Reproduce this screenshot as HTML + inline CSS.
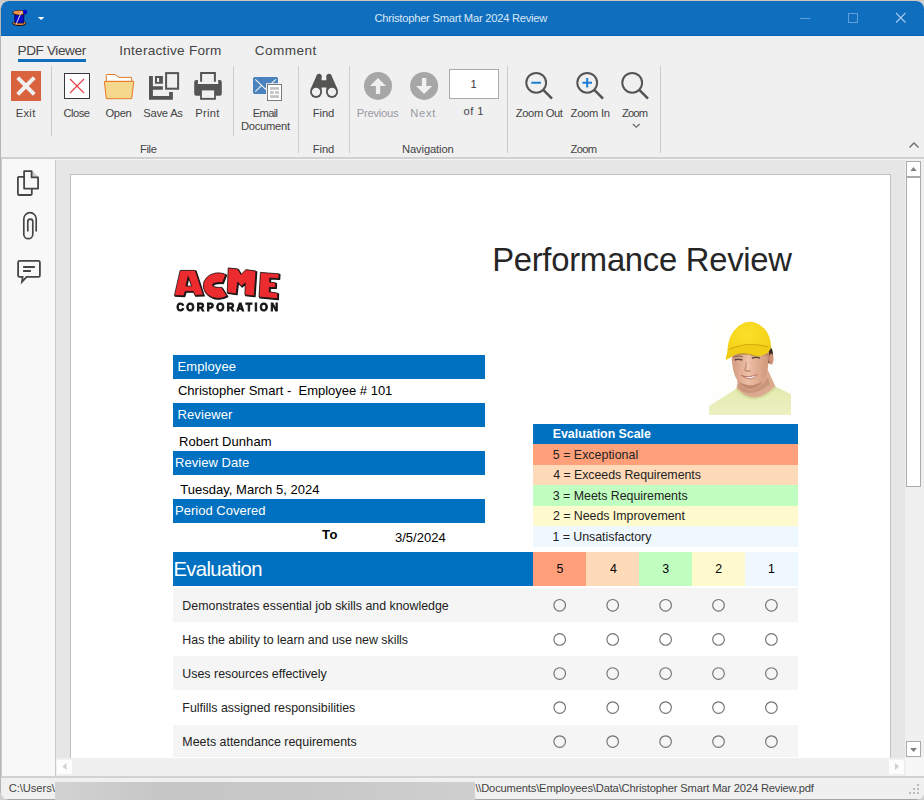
<!DOCTYPE html>
<html><head><meta charset="utf-8"><title>Christopher Smart Mar 2024 Review</title>
<style>
html,body{margin:0;padding:0;}
body{width:924px;height:800px;overflow:hidden;position:relative;background:#cfcfcf;font-family:"Liberation Sans",sans-serif;}
div,svg{position:absolute;box-sizing:border-box;}
.t{white-space:pre;margin:0;padding:0;}
#win{left:1px;top:1px;width:923px;height:799px;border-radius:8px 8px 8px 8px;overflow:hidden;background:#f0f0f0;}
#titlebar{left:0;top:0;width:923px;height:35px;background:#106ebe;}
#ribbon{left:0;top:35px;width:923px;height:121px;background:#f0f0f0;}
.vs{width:1px;background:#cdcdcd;}
#sidebar{left:1px;top:158px;width:53px;height:617px;background:#f8f8f8;}
#viewer{left:55px;top:159px;width:850px;height:598px;background:#e6e6e6;overflow:hidden;}
#page{left:14px;top:14px;width:821px;height:700px;background:#fff;border:1px solid #c2c2c2;}
.bar{background:#0070c0;}
</style></head><body>

<div style="left:0;top:8px;width:1px;height:785px;background:#b6b6b6;"></div>
<div style="left:0;top:0;width:924px;height:1px;background:#cfc8bd;"></div>
<div id="win">
 <div id="titlebar"></div>
 <div style="left:0;top:34px;width:923px;height:1px;background:#0a63b6;"></div>
 <div style="left:0;top:35px;width:923px;height:1px;background:#f8f6f1;"></div>
 <div id="ribbon"></div>
 <div style="left:0;top:156px;width:923px;height:2px;background:#d0d0d0;"></div>
 <div style="left:0;top:158px;width:1px;height:641px;background:#cccccc;"></div>
 <div id="sidebar"></div>
 <div style="left:54px;top:159px;width:1px;height:616px;background:#cacaca;"></div>
 <div style="left:55px;top:158px;width:868px;height:1px;background:#f4f4f4;"></div>
 <div id="viewer"><div id="page"></div></div>
 <!-- vertical scrollbar -->
 <div style="left:904px;top:159px;width:18px;height:598px;background:#f0f0f0;"></div>
 <div style="left:905px;top:160px;width:15px;height:16px;background:#fff;border:1px solid #ababab;"></div>
 <div style="left:905px;top:176px;width:15px;height:310px;background:#fff;border:1px solid #ababab;"></div>
 <div style="left:905px;top:740px;width:15px;height:16px;background:#fff;border:1px solid #ababab;"></div>
 <svg style="left:905px;top:160px" width="15" height="16"><path d="M4.3,10 L10.7,10 L7.5,6 Z" fill="#808080"/></svg>
 <svg style="left:905px;top:740px" width="15" height="16"><path d="M4.1,7 L11,7 L7.55,11 Z" fill="#808080"/></svg>
 <!-- horizontal scrollbar -->
 <div style="left:55px;top:757px;width:850px;height:18px;background:#f0f0f0;"></div>
 <div style="left:905px;top:757px;width:18px;height:18px;background:#f7f7f7;"></div>
 <div style="left:56px;top:759px;width:15px;height:14px;background:#fdfdfd;"></div>
 <div style="left:888px;top:759px;width:15px;height:14px;background:#fdfdfd;"></div>
 <svg style="left:56px;top:758px" width="15" height="15"><path d="M9.5,4 L9.5,11 L5.5,7.5 Z" fill="#cfcfcf"/></svg>
 <svg style="left:888px;top:758px" width="15" height="15"><path d="M6,4 L6,11 L10,7.5 Z" fill="#cfcfcf"/></svg>
 <!-- status bar -->
 <div style="left:0;top:775px;width:923px;height:2px;background:#d2d2d2;"></div>
 <div style="left:0;top:777px;width:923px;height:21px;background:#f0f0f0;"></div>
 <div style="left:0;top:798px;width:923px;height:1px;background:#a6a6a6;"></div>
 <div style="left:54px;top:781px;width:420px;height:19px;background:linear-gradient(90deg,#d2d2d2 0%,#c6c6c6 25%,#c8c8c8 60%,#cfcfcf 100%);"></div>

 <!-- app icon -->
 <svg style="left:8.6px;top:7.3px" width="20" height="20" viewBox="10 9 20 20">
  <ellipse cx="19.3" cy="24.3" rx="7" ry="2.6" fill="#1a0d05"/>
  <ellipse cx="19.3" cy="24" rx="6.3" ry="2" fill="#e8853a"/>
  <rect x="14.8" y="14" width="9" height="10" fill="#0a0acc" stroke="#050540" stroke-width="0.8"/>
  <ellipse cx="19.3" cy="13.8" rx="7" ry="2.7" fill="#1a0d05"/>
  <ellipse cx="19.3" cy="13.6" rx="6.3" ry="2.1" fill="#f0924a"/>
  <circle cx="25" cy="13" r="2.2" fill="#0a0acc"/>
  <path d="M21.8,12 L16.2,25" stroke="#d8d8e8" stroke-width="1"/>
 </svg>
 <svg style="left:36px;top:15px" width="9" height="6"><path d="M0.8,1 L7.4,1 L4.1,4 Z" fill="#fff"/></svg>
 <!-- window controls -->
 <svg style="left:795px;top:8px" width="120" height="20">
  <path d="M4,9.5 H14.5" stroke="#5f9fda" stroke-width="1"/>
  <rect x="52.5" y="4.5" width="9" height="9" fill="none" stroke="#5f9fda" stroke-width="1"/>
  <path d="M100,4 L109.5,13.5 M109.5,4 L100,13.5" stroke="#a5c8ea" stroke-width="1.1"/>
 </svg>

 <div style="left:17px;top:58px;width:68px;height:3px;background:#106ebe;"></div>
 <div class="vs" style="left:50px;top:65px;height:70px;"></div>
 <div class="vs" style="left:232px;top:65px;height:70px;"></div>
 <div class="vs" style="left:297px;top:65px;height:87px;"></div>
 <div class="vs" style="left:348px;top:65px;height:87px;"></div>
 <div class="vs" style="left:506px;top:65px;height:87px;"></div>
 <div class="vs" style="left:659px;top:65px;height:87px;"></div>
 <!-- exit -->
 <svg style="left:10px;top:70px" width="30" height="30"><rect width="30" height="30" fill="#d9623f"/><path d="M6.7,6.7 L23.3,23.3 M23.3,6.7 L6.7,23.3" stroke="#f0f0f0" stroke-width="4"/></svg>
 <!-- close -->
 <svg style="left:63px;top:72px" width="26" height="26"><rect x="0.5" y="0.5" width="25" height="25" fill="#fff" stroke="#383838"/><path d="M6,6 L20,20 M20,6 L6,20" stroke="#e63946" stroke-width="1.1"/></svg>
 <!-- open -->
 <svg style="left:102px;top:72px" width="34" height="28" viewBox="103 73 34 28">
  <path d="M106.3,81.4 V75.3 Q106.3,74.5 107.1,74.5 H115 L119,77.4 H131.6 V81.4 Z" fill="#fdfdfd" stroke="#e67a26" stroke-width="1"/>
  <path d="M104.3,81.4 H133.8 L131.7,98.7 H106.3 Z" fill="#f5d88c" stroke="#e67a26" stroke-width="1" stroke-linejoin="round"/>
 </svg>
 <!-- save as -->
 <svg style="left:147px;top:70px" width="34" height="31" viewBox="148 71 34 31">
  <path d="M149,76 H152.9 V86.3 H162.9 V89.7 H152.9 V96 H169.1 V92 H172.9 V99.8 H149 Z" fill="#555"/>
  <path d="M155,76 H162.9 V83.8 H155 Z M157,77.9 V81.9 H159.1 V77.9 Z" fill="#555" fill-rule="evenodd"/>
  <rect x="166.1" y="73.1" width="12" height="15.6" fill="none" stroke="#555" stroke-width="2"/>
 </svg>
 <!-- print -->
 <svg style="left:192px;top:70px" width="32" height="31" viewBox="193 71 32 31">
  <path d="M196.2,80 H197.9 V84 H218.2 V80 H219.8 Q221.8,80 221.8,82 V93.8 Q221.8,95.8 219.8,95.8 H196.2 Q194.2,95.8 194.2,93.8 V82 Q194.2,80 196.2,80 Z" fill="#555"/>
  <path d="M201.1,81.7 V73.1 H214.9 V81.7" fill="none" stroke="#555" stroke-width="2"/>
  <rect x="200.1" y="89.3" width="15.8" height="10.5" fill="#555"/>
  <rect x="201.9" y="90.4" width="12.2" height="7.5" fill="#f0f0f0"/>
 </svg>
 <!-- email document -->
 <svg style="left:251px;top:75px" width="34" height="28" viewBox="252 76 34 28">
  <rect x="253" y="77" width="25" height="17" rx="1.8" fill="#4a82bd"/>
  <path d="M255.3,79.4 L266,89.6 M275.9,79.4 L265.5,89 M255.3,91.6 L261.4,85.6" stroke="#f4f4f4" stroke-width="1.1" fill="none"/>
  <rect x="266" y="83.2" width="17" height="18.7" fill="#f0f0f0"/>
  <rect x="267.5" y="84.5" width="14" height="16" fill="#fff" stroke="#7b7b7b" stroke-width="1"/>
  <rect x="270" y="87.1" width="9" height="2.7" fill="#c2c2c2"/>
  <rect x="270" y="91.2" width="3.9" height="2.6" fill="#c2c2c2"/><rect x="275.1" y="91.2" width="3.9" height="2.6" fill="#c2c2c2"/>
  <rect x="270" y="95.2" width="9" height="2.7" fill="#c2c2c2"/>
 </svg>
 <!-- find -->
 <svg style="left:308px;top:72px" width="32" height="28" viewBox="309 73 32 28">
  <path d="M316.75,75.3 L310.4,89.6 L316,97 L321.6,92 L321.6,87.6 L326.3,87.6 L326.3,92 L332,97 L337.7,89.6 L331.35,75.3 L329,73.7 L326.3,76 L326.3,80.2 L321.6,80.2 L321.6,76 L319.1,73.7 Z" fill="#555553"/>
  <circle cx="319.1" cy="76.2" r="2.5" fill="#555553"/><circle cx="329" cy="76.2" r="2.5" fill="#555553"/>
  <circle cx="316.07" cy="91.9" r="6" fill="#555553"/><circle cx="332" cy="91.9" r="6" fill="#555553"/>
  <circle cx="316.07" cy="91.9" r="4.2" fill="#f0f0f0"/><circle cx="332" cy="91.9" r="4.2" fill="#f0f0f0"/>
 </svg>
 <!-- previous / next -->
 <svg style="left:362px;top:70px" width="80" height="30" viewBox="363 71 80 30">
  <circle cx="378" cy="85.9" r="14" fill="#a7a7a7"/>
  <path d="M378,77.9 L386,86 H380.2 V93.9 H375.9 V86 H370 Z" fill="#f0f0f0"/>
  <circle cx="424.1" cy="85.9" r="14" fill="#a7a7a7"/>
  <path d="M424.1,93.9 L432.2,86 H426.3 V77.9 H421.9 V86 H416.1 Z" fill="#f0f0f0"/>
 </svg>
 <div style="left:448px;top:68px;width:50px;height:30px;background:#fff;border:1px solid #ababab;"></div>
 <!-- zoom icons -->
 <svg style="left:523px;top:70px" width="130" height="32" viewBox="524 71 130 32">
  <g fill="none" stroke="#555" stroke-width="2">
   <circle cx="536.2" cy="82.8" r="9.9"/><circle cx="587.2" cy="82.8" r="9.9"/><circle cx="632.2" cy="82.8" r="9.9"/>
  </g>
  <g stroke="#555" stroke-width="2.6">
   <path d="M543.3,89.9 L552,98.6"/><path d="M594.3,89.9 L603,98.6"/><path d="M639.3,89.9 L648,98.6"/>
  </g>
  <path d="M531.3,82.8 H541" stroke="#1a7fd4" stroke-width="2"/>
  <path d="M582.4,82.8 H592 M587.2,78 V87.6" stroke="#1a7fd4" stroke-width="2"/>
 </svg>
 <svg style="left:630px;top:121px" width="11" height="7" viewBox="630 121 11 7"><path d="M631.8,123 L635.25,126.2 L638.7,123" stroke="#6a6a6a" stroke-width="1.2" fill="none"/></svg>
 <!-- collapse chevron -->
 <svg style="left:907px;top:140px" width="12" height="8"><path d="M1.5,6.5 L6,2 L10.5,6.5" stroke="#6a6a6a" stroke-width="1.3" fill="none"/></svg>

 <svg style="left:14px;top:166px" width="30" height="122" viewBox="15 167 30 122">
  <g fill="none" stroke="#464646" stroke-width="1.8" stroke-linejoin="round">
   <path d="M32,170.6 L38.6,177 H32 Z" fill="#cdcdcd" stroke="none"/>
   <path d="M24.1,171.1 H31.6 V177.4 H38.1 V188.6 H24.1 Z"/>
   <path d="M24.1,176.9 H18.8 Q17.9,176.9 17.9,177.8 V194.1 Q17.9,195 18.8,195 H30.9 Q31.8,195 31.8,194.1 V189"/>
   <path d="M36.2,231.5 V218.9 A6.2,6.2 0 0 0 23.8,218.9 V234.2 A4.5,4.5 0 0 0 32.8,234.2 V221.6 A2.5,2.5 0 0 0 27.8,221.6 V231.5" stroke-width="1.7" stroke-linecap="butt"/>
   <path d="M22.6,276.9 H19.6 Q18.1,276.9 18.1,275.4 V262.4 Q18.1,260.9 19.6,260.9 H38.4 Q39.9,260.9 39.9,262.4 V275.4 Q39.9,276.9 38.4,276.9 H26.6 L22,281.9 Z" stroke-linejoin="miter"/>
   <path d="M23.1,267 H34.9 M23.1,271 H30.9"/>
  </g>
 </svg>

 <svg style="left:907px;top:782px" width="14" height="14"><g fill="#bdbdbd"><rect x="9" y="1" width="2" height="2"/><rect x="5" y="5" width="2" height="2"/><rect x="9" y="5" width="2" height="2"/><rect x="1" y="9" width="2" height="2"/><rect x="5" y="9" width="2" height="2"/><rect x="9" y="9" width="2" height="2"/></g></svg>
</div>
<div style="left:56px;top:160px;width:849px;height:597px;overflow:hidden;"><div style="left:-56px;top:-160px;width:924px;height:800px;">
<div class="bar" style="left:173px;top:355px;width:312px;height:24px;"></div>
<div class="bar" style="left:173px;top:403px;width:312px;height:24px;"></div>
<div class="bar" style="left:173px;top:451px;width:312px;height:24px;"></div>
<div class="bar" style="left:173px;top:499px;width:312px;height:24px;"></div>
<div class="bar" style="left:533px;top:424px;width:265px;height:20px;"></div>
<div style="left:533px;top:444px;width:265px;height:20.5px;background:#ffa07a;"></div>
<div style="left:533px;top:464.5px;width:265px;height:20.5px;background:#ffdab9;"></div>
<div style="left:533px;top:485px;width:265px;height:20.5px;background:#c1ffc1;"></div>
<div style="left:533px;top:505.5px;width:265px;height:20.5px;background:#fffacd;"></div>
<div style="left:533px;top:526px;width:265px;height:20.5px;background:#f0f8ff;"></div>
<div class="bar" style="left:173px;top:552px;width:360px;height:33.6px;"></div>
<div style="left:533px;top:552px;width:53px;height:33.6px;background:#ffa07a;"></div>
<div style="left:586px;top:552px;width:53px;height:33.6px;background:#ffdab9;"></div>
<div style="left:639px;top:552px;width:53px;height:33.6px;background:#c1ffc1;"></div>
<div style="left:692px;top:552px;width:53px;height:33.6px;background:#fffacd;"></div>
<div style="left:745px;top:552px;width:53px;height:33.6px;background:#f0f8ff;"></div>
<div style="left:173px;top:588.00px;width:625px;height:34.15px;background:#f5f5f5;"></div>
<div style="left:173px;top:622.15px;width:625px;height:34.15px;background:#ffffff;"></div>
<div style="left:173px;top:656.30px;width:625px;height:34.15px;background:#f5f5f5;"></div>
<div style="left:173px;top:690.45px;width:625px;height:34.15px;background:#ffffff;"></div>
<div style="left:173px;top:724.60px;width:625px;height:34.15px;background:#f5f5f5;"></div>
<svg style="left:533px;top:586px" width="265" height="171" viewBox="533 586 265 171"><g fill="none" stroke="#727272" stroke-width="1.15"><circle cx="559.7" cy="605.3" r="5.8"/><circle cx="612.7" cy="605.3" r="5.8"/><circle cx="665.6" cy="605.3" r="5.8"/><circle cx="718.5" cy="605.3" r="5.8"/><circle cx="771.4" cy="605.3" r="5.8"/><circle cx="559.7" cy="639.4" r="5.8"/><circle cx="612.7" cy="639.4" r="5.8"/><circle cx="665.6" cy="639.4" r="5.8"/><circle cx="718.5" cy="639.4" r="5.8"/><circle cx="771.4" cy="639.4" r="5.8"/><circle cx="559.7" cy="673.5" r="5.8"/><circle cx="612.7" cy="673.5" r="5.8"/><circle cx="665.6" cy="673.5" r="5.8"/><circle cx="718.5" cy="673.5" r="5.8"/><circle cx="771.4" cy="673.5" r="5.8"/><circle cx="559.7" cy="707.6" r="5.8"/><circle cx="612.7" cy="707.6" r="5.8"/><circle cx="665.6" cy="707.6" r="5.8"/><circle cx="718.5" cy="707.6" r="5.8"/><circle cx="771.4" cy="707.6" r="5.8"/><circle cx="559.7" cy="741.6" r="5.8"/><circle cx="612.7" cy="741.6" r="5.8"/><circle cx="665.6" cy="741.6" r="5.8"/><circle cx="718.5" cy="741.6" r="5.8"/><circle cx="771.4" cy="741.6" r="5.8"/></g></svg>

<svg style="left:170px;top:262px" width="116" height="54" viewBox="170 262 116 54">
 <defs><g id="acme">
  <path fill-rule="evenodd" d="M180.1,270.4 L195.3,270.4 L203.4,295.1 L195,295.4 L193.3,291.4 L185.2,291.4 L183.9,295.8 L174.4,295.4 Z M188.1,276.5 L191.6,286 L185.9,286 Z"/>
  <path d="M225.75,274.5 A15,12.8 0 1 0 227,296 L221.5,287.3 C215.5,287.7 212.5,286.6 212.5,285 C212.5,283.4 215.5,282.3 222.5,282.7 Z"/>
  <path d="M228.2,267.9 L237.6,268.9 L241,274.5 L245.9,269.6 L255.9,271 L254.2,295.9 L244.9,294.9 L245.2,282.8 L241.4,286.2 L237.6,282 L236.2,293.9 L227.2,292.5 Z"/>
  <path d="M260.4,272.4 L279.1,273.8 L278.8,278.6 L269.8,278 L269.6,282.1 L275.7,282.8 L275.5,287.6 L269.4,287.3 L269.2,291.8 L277.7,293.2 L277.5,298.7 L259,297 Z"/>
 </g></defs>
 <use href="#acme" transform="translate(0.8,0.8)" fill="#151515" stroke="#151515" stroke-width="1.3" stroke-linejoin="round"/>
 <use href="#acme" fill="#ec2b2f" stroke="#151515" stroke-width="0.75" stroke-linejoin="round"/>
 <g opacity="0.99"><text x="176.4" y="310.5" font-family="Liberation Sans, sans-serif" font-weight="700" font-size="10.4" textLength="101.5" lengthAdjust="spacing" fill="#111" stroke="#111" stroke-width="0.9">CORPORATION</text></g>
</svg>


<svg style="left:705px;top:315px" width="90" height="104" viewBox="705 315 90 104">
 <defs><filter id="bl" x="-5%" y="-5%" width="110%" height="110%"><feGaussianBlur stdDeviation="0.75"/></filter>
 <clipPath id="pc"><rect x="709" y="319" width="82" height="96"/></clipPath>
 <radialGradient id="capg" cx="0.45" cy="0.35" r="0.75"><stop offset="0" stop-color="#fbe02a"/><stop offset="0.7" stop-color="#f5d31a"/><stop offset="1" stop-color="#e3b90f"/></radialGradient>
 <linearGradient id="skg" x1="0" y1="0" x2="1" y2="0"><stop offset="0" stop-color="#d39a7e"/><stop offset="0.45" stop-color="#ecbfa6"/><stop offset="1" stop-color="#cf9577"/></linearGradient>
 <linearGradient id="shg" x1="0" y1="0" x2="0" y2="1"><stop offset="0" stop-color="#e3eaae"/><stop offset="1" stop-color="#edf2c6"/></linearGradient>
 </defs>
 <rect x="709" y="319" width="82" height="96" fill="#fefefd"/>
 <g clip-path="url(#pc)"><g filter="url(#bl)">
  <!-- neck -->
  <path d="M738,378 L736,392 Q754,408 777,390 L767,368 Z" fill="#dcaa8e"/>
  <path d="M739,383.5 Q750,392.5 764,383 L767.5,377 L770,384 Q757,396 744,392 Q740,390 738,387 Z" fill="#c9967a"/>
  <!-- shirt -->
  <path d="M705,408.5 Q722,398 736,389 Q754,409 775.9,387 Q784,390.5 795,396.5 V420 H705 Z" fill="url(#shg)"/>
  <path d="M736,389 Q754,409 775.9,387" fill="none" stroke="#d6df9f" stroke-width="2.2"/>
  <!-- hair -->
  <path d="M764,345 Q773.5,345 773,356 L771.5,364 L765,362 Z" fill="#3b2a20"/>
  <!-- ear -->
  <ellipse cx="771.2" cy="359" rx="2.3" ry="5.5" fill="#cf9073"/>
  <!-- face -->
  <path d="M731.5,355 Q732,368 735,376 Q740,388 749.5,390 Q759,389 764,380 Q769.5,368 769,350 L738,348 Z" fill="url(#skg)"/>
  <path d="M733,352 Q745,348 768,351 L768,356.5 Q750,351 733,357.5 Z" fill="#b98569" opacity="0.75"/>
  <path d="M737,380 Q743,388.5 749.5,389.5 Q757,389 763,381 Q755,386 748,385 Q741,384 737,380 Z" fill="#c18b6f"/>
  <!-- eyes / brows -->
  <path d="M734.5,360 Q738,358.4 742.5,360 M752,358.2 Q756,356.6 759.8,358" stroke="#5a463b" stroke-width="1.5" fill="none"/>
  <path d="M733.5,357.2 Q738,355.2 743,356.8 M751,355 Q756,353 761,354.8" stroke="#6b5243" stroke-width="1" fill="none" opacity="0.8"/>
  <path d="M746.5,361 Q746.5,367 745,370.3 Q747.5,372 750.5,370.5" stroke="#c38d70" stroke-width="1.4" fill="none"/>
  <path d="M746.8,359 L748.2,369" stroke="#f3d0bb" stroke-width="1.6" fill="none" opacity="0.8"/>
  <!-- smile -->
  <path d="M741.5,375.5 Q748,378.5 757,374.5 Q752,383 741.5,375.5 Z" fill="#fdfdfd" stroke="#b4655a" stroke-width="0.9"/>
  <!-- cap -->
  <path d="M727.5,357 Q726,335 740,325 Q748,319.5 756,323 Q771.5,330 770.8,349 Q758,346 745,350.5 Q734,354 729,358.5 Z" fill="url(#capg)"/>
  <path d="M725.8,358.8 Q726.5,351 731,348.5 Q748,341 764,345.5 Q769,347 770.5,349 Q767,356 757,356.2 Q746,352 737.5,354 Q730,356 726.5,360 Z" fill="#f2cd17"/>
  <path d="M729,349.5 Q747,341 768,347" stroke="#d4ae0c" stroke-width="1.1" fill="none"/>
  <path d="M737.5,354.5 Q746,352.5 757,356.5" stroke="#b8960a" stroke-width="1" fill="none" opacity="0.7"/>
 </g></g>
</svg>

</div></div><div class="t" style="left:374.53px;top:11.00px;font-size:11.2px;line-height:15px;color:#dbe8f5;letter-spacing:-0.252px;">Christopher Smart Mar 2024 Review</div>
<div class="t" style="left:17.55px;top:42.01px;font-size:13.6px;line-height:18px;color:#444;letter-spacing:-0.405px;">PDF Viewer</div>
<div class="t" style="left:119.23px;top:42.01px;font-size:13.6px;line-height:18px;color:#444;letter-spacing:0.264px;">Interactive Form</div>
<div class="t" style="left:254.72px;top:42.01px;font-size:13.6px;line-height:18px;color:#444;letter-spacing:0.438px;">Comment</div>
<div class="t" style="left:15.65px;top:106.00px;font-size:11.2px;line-height:15px;color:#444;letter-spacing:0.335px;">Exit</div>
<div class="t" style="left:63.53px;top:106.00px;font-size:11.2px;line-height:15px;color:#444;letter-spacing:-0.515px;">Close</div>
<div class="t" style="left:105.47px;top:106.00px;font-size:11.2px;line-height:15px;color:#444;letter-spacing:-0.349px;">Open</div>
<div class="t" style="left:143.29px;top:106.00px;font-size:11.2px;line-height:15px;color:#444;letter-spacing:-0.229px;">Save As</div>
<div class="t" style="left:195.35px;top:106.00px;font-size:11.2px;line-height:15px;color:#444;letter-spacing:0.250px;">Print</div>
<div class="t" style="left:252.85px;top:106.00px;font-size:11.2px;line-height:15px;color:#444;letter-spacing:-0.733px;">Email</div>
<div class="t" style="left:241.05px;top:119.00px;font-size:11.2px;line-height:15px;color:#444;letter-spacing:-0.286px;">Document</div>
<div class="t" style="left:312.75px;top:106.00px;font-size:11.2px;line-height:15px;color:#444;letter-spacing:-0.067px;">Find</div>
<div class="t" style="left:356.85px;top:106.00px;font-size:11.2px;line-height:15px;color:#9a9aa4;letter-spacing:-0.262px;">Previous</div>
<div class="t" style="left:410.35px;top:106.00px;font-size:11.2px;line-height:15px;color:#9a9aa4;letter-spacing:0.634px;">Next</div>
<div class="t" style="left:470.47px;top:77.31px;font-size:11.2px;line-height:15px;color:#333;letter-spacing:0.000px;">1</div>
<div class="t" style="left:463.60px;top:103.50px;font-size:11.2px;line-height:15px;color:#444;letter-spacing:0.428px;">of 1</div>
<div class="t" style="left:515.68px;top:106.00px;font-size:11.2px;line-height:15px;color:#444;letter-spacing:-0.349px;">Zoom Out</div>
<div class="t" style="left:570.58px;top:106.00px;font-size:11.2px;line-height:15px;color:#444;letter-spacing:-0.281px;">Zoom In</div>
<div class="t" style="left:621.88px;top:106.00px;font-size:11.2px;line-height:15px;color:#444;letter-spacing:-0.826px;">Zoom</div>
<div class="t" style="left:139.95px;top:142.00px;font-size:11.2px;line-height:15px;color:#444;letter-spacing:-0.351px;">File</div>
<div class="t" style="left:312.75px;top:142.00px;font-size:11.2px;line-height:15px;color:#444;letter-spacing:-0.067px;">Find</div>
<div class="t" style="left:402.05px;top:142.00px;font-size:11.2px;line-height:15px;color:#444;letter-spacing:-0.129px;">Navigation</div>
<div class="t" style="left:570.58px;top:142.00px;font-size:11.2px;line-height:15px;color:#444;letter-spacing:-0.726px;">Zoom</div>
<div class="t" style="left:8.63px;top:781.11px;font-size:11.2px;line-height:15px;color:#444;letter-spacing:-0.056px;">C:\Users\</div>
<div class="t" style="left:475.38px;top:781.11px;font-size:11.2px;line-height:15px;color:#444;letter-spacing:-0.182px;">\\Documents\Employees\Data\Christopher Smart Mar 2024 Review.pdf</div>
<div class="t" style="left:492.15px;top:237.51px;font-size:32.8px;line-height:43px;color:#262626;letter-spacing:-0.270px;">Performance Review</div>
<div class="t" style="left:177.55px;top:358.00px;font-size:13px;line-height:17px;color:#fff;letter-spacing:0.081px;">Employee</div>
<div class="t" style="left:177.96px;top:382.00px;font-size:13px;line-height:17px;color:#000;letter-spacing:-0.006px;">Christopher Smart -  Employee # 101</div>
<div class="t" style="left:177.55px;top:406.00px;font-size:13px;line-height:17px;color:#fff;letter-spacing:0.086px;">Reviewer</div>
<div class="t" style="left:178.95px;top:433.00px;font-size:13px;line-height:17px;color:#000;letter-spacing:0.067px;">Robert Dunham</div>
<div class="t" style="left:175.05px;top:454.00px;font-size:13px;line-height:17px;color:#fff;letter-spacing:0.037px;">Review Date</div>
<div class="t" style="left:180.19px;top:481.00px;font-size:13px;line-height:17px;color:#000;letter-spacing:0.023px;">Tuesday, March 5, 2024</div>
<div class="t" style="left:175.05px;top:502.00px;font-size:13px;line-height:17px;color:#fff;letter-spacing:0.016px;">Period Covered</div>
<div class="t" style="left:322.05px;top:526.00px;font-size:13px;line-height:17px;color:#000;font-weight:700;letter-spacing:0.447px;">To</div>
<div class="t" style="left:394.89px;top:529.00px;font-size:13px;line-height:17px;color:#000;letter-spacing:0.034px;">3/5/2024</div>
<div class="t" style="left:552.72px;top:426.01px;font-size:12.4px;line-height:16px;color:#fff;font-weight:700;letter-spacing:-0.018px;">Evaluation Scale</div>
<div class="t" style="left:552.79px;top:447.01px;font-size:12.4px;line-height:16px;color:#222;letter-spacing:0.020px;">5 = Exceptional</div>
<div class="t" style="left:553.30px;top:467.01px;font-size:12.4px;line-height:16px;color:#222;letter-spacing:-0.068px;">4 = Exceeds Requirements</div>
<div class="t" style="left:552.82px;top:488.01px;font-size:12.4px;line-height:16px;color:#222;letter-spacing:-0.027px;">3 = Meets Requirements</div>
<div class="t" style="left:552.89px;top:508.01px;font-size:12.4px;line-height:16px;color:#222;letter-spacing:-0.030px;">2 = Needs Improvement</div>
<div class="t" style="left:552.45px;top:529.01px;font-size:12.4px;line-height:16px;color:#222;letter-spacing:-0.033px;">1 = Unsatisfactory</div>
<div class="t" style="left:173.39px;top:556.01px;font-size:20.3px;line-height:26px;color:#fff;letter-spacing:-0.616px;">Evaluation</div>
<div class="t" style="left:556.39px;top:561.01px;font-size:12.4px;line-height:16px;color:#000;letter-spacing:0.000px;">5</div>
<div class="t" style="left:609.90px;top:561.01px;font-size:12.4px;line-height:16px;color:#000;letter-spacing:0.000px;">4</div>
<div class="t" style="left:662.32px;top:561.01px;font-size:12.4px;line-height:16px;color:#000;letter-spacing:0.000px;">3</div>
<div class="t" style="left:715.29px;top:561.01px;font-size:12.4px;line-height:16px;color:#000;letter-spacing:0.000px;">2</div>
<div class="t" style="left:767.95px;top:561.01px;font-size:12.4px;line-height:16px;color:#000;letter-spacing:0.000px;">1</div>
<div class="t" style="left:182.35px;top:598.01px;font-size:12.4px;line-height:16px;color:#222;letter-spacing:-0.004px;">Demonstrates essential job skills and knowledge</div>
<div class="t" style="left:182.35px;top:632.01px;font-size:12.4px;line-height:16px;color:#222;letter-spacing:-0.021px;">Has the ability to learn and use new skills</div>
<div class="t" style="left:182.35px;top:666.01px;font-size:12.4px;line-height:16px;color:#222;letter-spacing:-0.002px;">Uses resources effectively</div>
<div class="t" style="left:182.35px;top:700.01px;font-size:12.4px;line-height:16px;color:#222;letter-spacing:0.001px;">Fulfills assigned responsibilities</div>
<div class="t" style="left:182.35px;top:734.01px;font-size:12.4px;line-height:16px;color:#222;letter-spacing:0.003px;">Meets attendance requirements</div>
</body></html>
